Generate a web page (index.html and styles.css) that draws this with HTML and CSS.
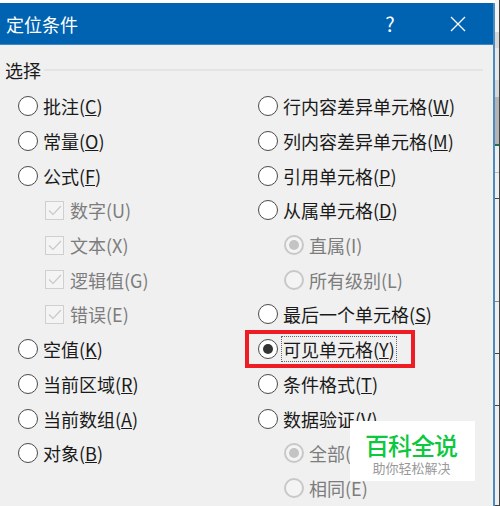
FILE: index.html
```html
<!DOCTYPE html>
<html>
<head>
<meta charset="utf-8" />
<title>定位条件</title>
<link rel="stylesheet" href="styles.css">
</head>
<body>
	<div class="dialog">
		<div class="title-bar">
			<span class="title">定位条件</span>
			<span class="btn-help">?</span>
			<svg class="btn-close" width="16" height="16" viewBox="0 0 16 16"><path d="M1 1L15 15M15 1L1 15" stroke="#fff" stroke-width="1.3" fill="none"/></svg>
		</div>
		<div class="group-head">
			<span class="group-name">选择</span>
			<div class="group-line"></div>
		</div>
		<div class="options">
			<div class="col col-left">
				<div class="row"><i class="radio"></i><span>批注(<u>C</u>)</span></div>
				<div class="row"><i class="radio"></i><span>常量(<u>O</u>)</span></div>
				<div class="row"><i class="radio"></i><span>公式(<u>F</u>)</span></div>
				<div class="row sub off"><i class="check"><svg width="17" height="17" viewBox="0 0 17 17"><path d="M3 8.5L7 12.5L15 4" stroke="#c8c8c8" stroke-width="1.2" fill="none"/></svg></i><span>数字(U)</span></div>
				<div class="row sub off"><i class="check"><svg width="17" height="17" viewBox="0 0 17 17"><path d="M3 8.5L7 12.5L15 4" stroke="#c8c8c8" stroke-width="1.2" fill="none"/></svg></i><span>文本(X)</span></div>
				<div class="row sub off"><i class="check"><svg width="17" height="17" viewBox="0 0 17 17"><path d="M3 8.5L7 12.5L15 4" stroke="#c8c8c8" stroke-width="1.2" fill="none"/></svg></i><span>逻辑值(G)</span></div>
				<div class="row sub off"><i class="check"><svg width="17" height="17" viewBox="0 0 17 17"><path d="M3 8.5L7 12.5L15 4" stroke="#c8c8c8" stroke-width="1.2" fill="none"/></svg></i><span>错误(E)</span></div>
				<div class="row"><i class="radio"></i><span>空值(<u>K</u>)</span></div>
				<div class="row"><i class="radio"></i><span>当前区域(<u>R</u>)</span></div>
				<div class="row"><i class="radio"></i><span>当前数组(<u>A</u>)</span></div>
				<div class="row"><i class="radio"></i><span>对象(<u>B</u>)</span></div>
			</div>
			<div class="col col-right">
				<div class="row"><i class="radio"></i><span>行内容差异单元格(<u>W</u>)</span></div>
				<div class="row"><i class="radio"></i><span>列内容差异单元格(<u>M</u>)</span></div>
				<div class="row"><i class="radio"></i><span>引用单元格(<u>P</u>)</span></div>
				<div class="row"><i class="radio"></i><span>从属单元格(<u>D</u>)</span></div>
				<div class="row sub off"><i class="radio on"></i><span>直属(I)</span></div>
				<div class="row sub off"><i class="radio"></i><span>所有级别(L)</span></div>
				<div class="row"><i class="radio"></i><span>最后一个单元格(<u>S</u>)</span></div>
				<div class="row mark-row">
					<i class="radio on"></i><span class="focus">可见单元格(<u>Y</u>)</span>
					<div class="red-box"></div>
				</div>
				<div class="row"><i class="radio"></i><span>条件格式(<u>T</u>)</span></div>
				<div class="row"><i class="radio"></i><span>数据验证(<u>V</u>)</span></div>
				<div class="row sub off"><i class="radio on"></i><span>全部(A)</span></div>
				<div class="row sub off"><i class="radio"></i><span>相同(E)</span></div>
			</div>
		</div>
		<div class="stamp">
			<p class="stamp-name">百科全说</p>
			<p class="stamp-sub">助你轻松解决</p>
		</div>
	</div>
	<div class="sheet">
		<div class="sheet-top"></div>
		<div class="sheet-head"></div>
		<div class="sheet-cell c1"></div>
		<div class="sheet-cell c2"></div>
		<div class="sheet-cell c3"></div>
		<div class="sheet-cell c4"></div>
		<div class="sheet-cell c5"></div>
		<div class="sheet-cell c6"></div>
	</div>
</body>
</html>
```
FILE: styles.css
```css
*{margin: 0;padding: 0;box-sizing: border-box;}
html,body {height: 100%;overflow: hidden;}
body {display: flex;background-color: #fff;font-family: "Noto Sans CJK SC","Noto Sans",sans-serif;font-size: 18px;color: #1a1a1a;}

.dialog {width: 495px;height: 503px;margin-top: 3px;position: relative;background-color: #f0f0f0;border-right: 2px solid #4d8abf;overflow: hidden;}
.title-bar {height: 42px;display: flex;align-items: center;background-color: #0063b1;color: #fff;border-bottom: 1px solid #3f87c2;}
.title {margin-left: 6px;line-height: 40px;}
.btn-help {margin-left: auto;font-size: 20px;line-height: 38px;width: 12px;text-align: center;}
.btn-close {margin: 0 27px 0 54px;}

.group-head {display: flex;align-items: center;height: 24px;margin-top: 13px;padding: 0 10px 0 5px;}
.group-name {line-height: 24px;}
.group-line {flex: 1;height: 2px;margin: 0 0 1px 3px;background-color: #e4e4e4;}

.options {display: flex;margin-top: 7px;}
.col-left {width: 239px;padding-left: 18px;}
.col-right {flex: 1;padding-left: 19px;}
.row {height: 34.7px;display: flex;align-items: center;position: relative;white-space: nowrap;}
.row span {line-height: 24px;}
.row.sub {padding-left: 26px;}
.col-left .row.sub {padding-left: 27px;}
.off {color: #7d7d7d;}

.radio {flex: none;position: relative;width: 20px;height: 20px;margin-right: 5px;border: 1.5px solid #4a4a4a;border-radius: 50%;background-color: #fff;}
.off .radio {border: 2px solid #c8c8c8;background-color: #f4f4f4;}
.radio.on::after {content: "";position: absolute;left: 3.5px;top: 3.5px;width: 10px;height: 10px;border-radius: 50%;background-color: #333;}
.off .radio.on::after {left: 3px;top: 3px;background-color: #c4c4c4;}
.check {flex: none;width: 19px;height: 19px;margin-right: 6px;border: 1px solid #cfcfcf;background-color: #f4f4f4;}
.check svg {display: block;margin: 0;}

.focus {padding: 0 1px;margin-left: -1px;outline: 1px dotted #666;}
.red-box {position: absolute;left: -13px;top: -2px;width: 170px;height: 38px;border: 4px solid #ee1c25;}

.stamp {position: absolute;left: 350px;top: 418px;width: 125px;height: 60px;background-color: #fff;text-align: center;}
.stamp-name {font-size: 24px;line-height: 30px;margin-top: 9px;font-weight: 500;letter-spacing: -1px;margin-left: -3px;color: #0cc83e;}
.stamp-sub {font-size: 13px;line-height: 16px;margin-left: -2px;color: #999;}

.sheet {flex: 1;display: flex;flex-direction: column;height: 506px;border-right: 1px solid #444;}
.sheet-top {height: 97px;background: linear-gradient(#f4f4f4 0,#f4f4f4 32px,#d8d8d8 32px,#d8d8d8 48px,#e8e8e8 48px,#e8e8e8 80px,#d8d8d8 80px);}
.sheet-head {height: 49px;background-color: #b4b4b4;border-bottom: 2px solid #217346;}
.sheet-cell {background-color: #eee;border-bottom: 1px solid #444;}
.c1 {height: 27px;border-bottom-color: #bbb;}
.c2 {height: 26px;}
.c3 {height: 103px;border-bottom-color: #888;}
.c4 {height: 52px;}
.c5 {height: 52px;}
.c6 {flex: 1;}
```
